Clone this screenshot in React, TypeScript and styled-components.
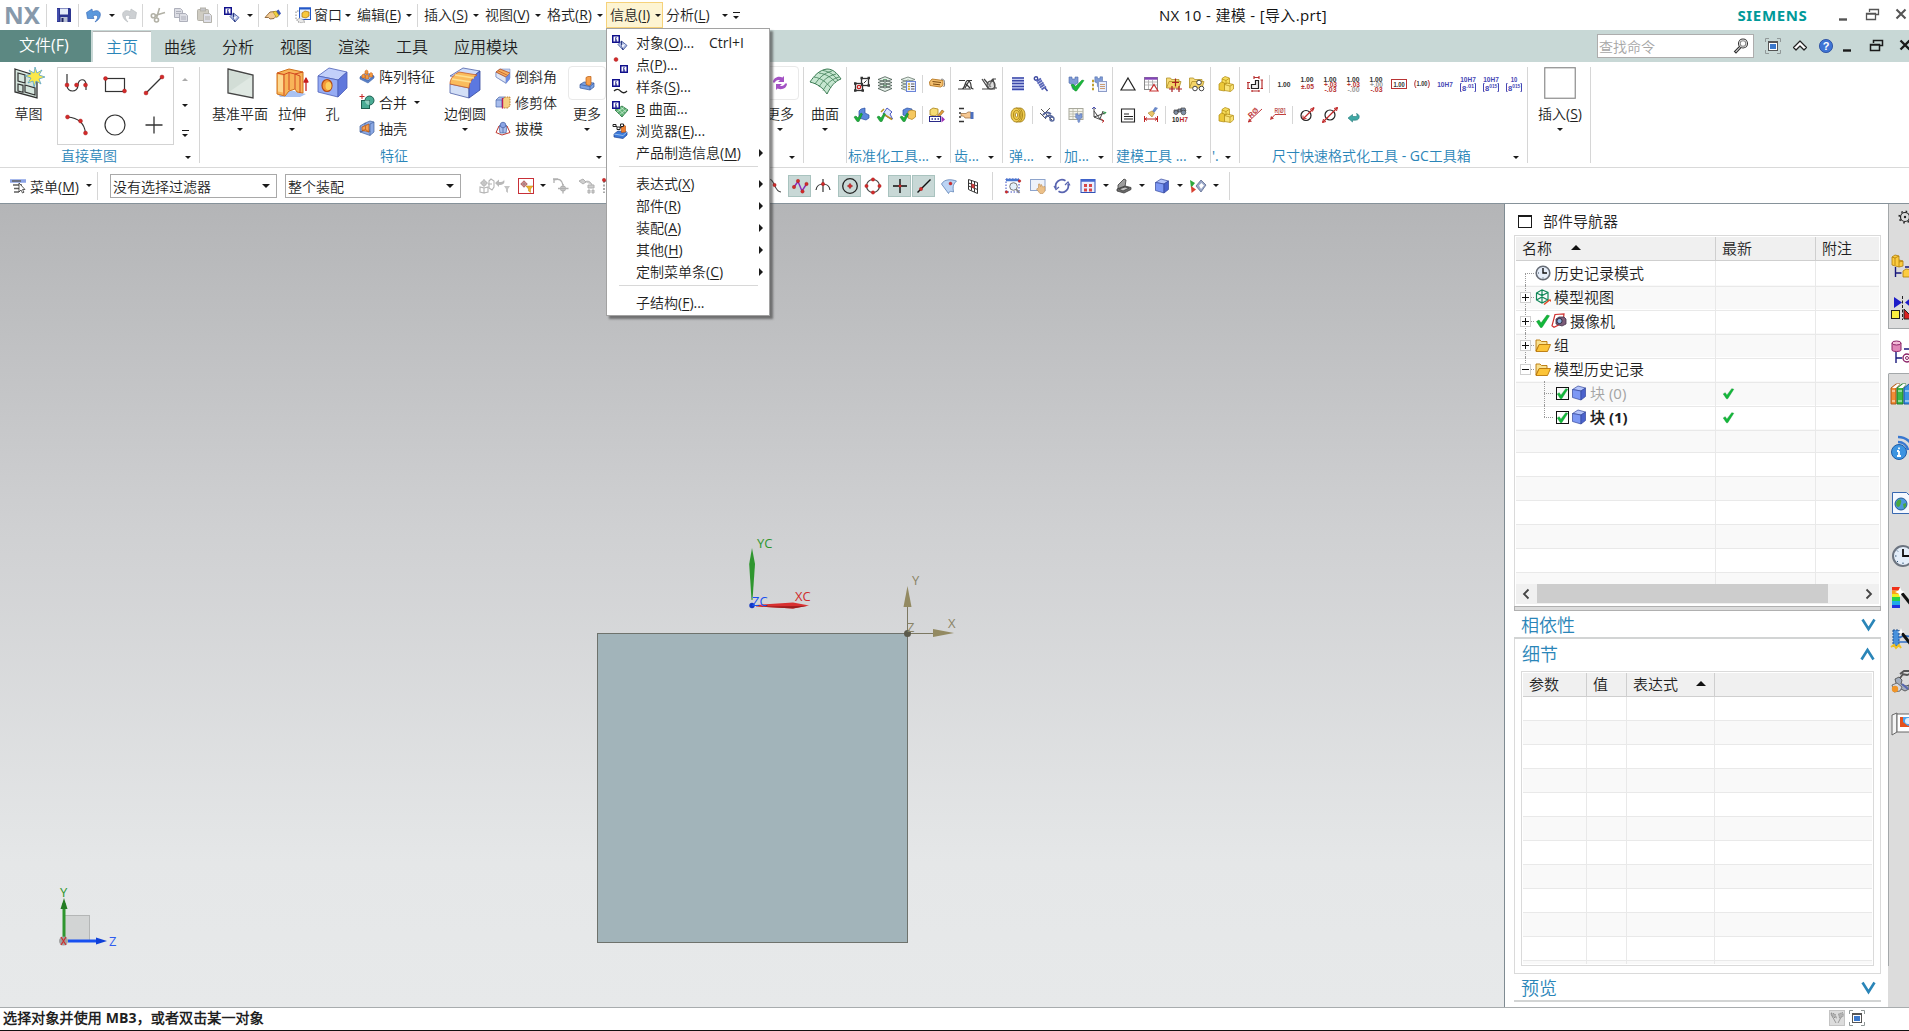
import React from "react";
import styled, { createGlobalStyle, css } from "styled-components";

const INK = "#1f1f1f";
const LINK = "#2a85b8";
const TEAL = "#c8d8d6";

const GlobalStyle = createGlobalStyle`
  * { box-sizing: border-box; }
  html, body { margin: 0; padding: 0; overflow: hidden; }
  body {
    font-family: "Open Sans", "Noto Sans CJK SC DemiLight", "Noto Sans CJK SC", sans-serif;
    font-size: 14px;
    color: ${INK};
    background: #fff;
  }
  u { text-underline-offset: 2px; text-decoration-thickness: 1px; }
`;

/* ---------- icons ---------- */

const cubeSmall = (top: string, left: string, right: string, line: string) => (
  <g stroke={line} strokeWidth=".7" strokeLinejoin="round">
    <path d="M1.500 4.500 7 1l7.500 2L10 6z" fill={top} />
    <path d="M1.500 4.500 10 6v9L1.500 12.500z" fill={left} />
    <path d="M14.500 3v8.500L10 15V6z" fill={right} />
  </g>
);

const infoBox = (x: number, y: number) => (
  <g transform={`translate(${x} ${y})`}>
    <rect x=".75" y=".75" width="6.500" height="6.500" fill="#fff" stroke="#10108c" strokeWidth="1.500" />
    <path d="M4 2v1M4 3.600v2.600M3 3.900h1M2.800 6.100h2.400" stroke="#10108c" strokeWidth="1" />
  </g>
);

const tick = <path d="M1.500 8.500 4 7l2 3 6-8 2.500.8L7 14.500H5.500z" fill="#12b83a" stroke="#0c8f2a" strokeWidth=".5" />;

const dims = (a: string, b?: string, c?: string, cb = "#b83434", cc = "#b83434") => (
  <g fontFamily="Liberation Sans, sans-serif" fontSize="7" textAnchor="middle" fontWeight="bold">
    <text x="8" y={b ? 6 : 10.500} fill="#333" textLength="13" lengthAdjust="spacingAndGlyphs">{a}</text>
    {b && <text x="8.500" y={c ? 11 : 12.500} fill={cb} fontSize="6.500" textLength="13" lengthAdjust="spacingAndGlyphs">{b}</text>}
    {c && <text x="8.500" y="16" fill={cc} fontSize="6.500" textLength="12" lengthAdjust="spacingAndGlyphs">{c}</text>}
  </g>
);

const fits = (a: string, b?: string) => (
  <g fontFamily="Liberation Sans, sans-serif" fontSize="7.500" textAnchor="middle" fontWeight="bold" fill="#4646b4">
    <text x="8" y={b ? 6 : 10.500} textLength={a.length > 2 ? 15.500 : 6.500} lengthAdjust="spacingAndGlyphs">{a}</text>
    {b && (
      <g>
        <path d="M1.500 7.500H.5v8h1M14.500 7.500h1v8h-1" fill="none" stroke="#4646b4" />
        <text x="4.200" y="15" fontSize="7.500">8</text>
        <text x="10.300" y="12" fontSize="5.500" textLength="8" lengthAdjust="spacingAndGlyphs">{b}</text>
      </g>
    )}
  </g>
);

const dot = (x: number, y: number, r = 1.700) => <circle cx={x} cy={y} r={r} fill="#d42a2a" stroke="#a01818" strokeWidth=".4" />;

const folderTree = (
  <g stroke="#b87608" strokeWidth=".9" strokeLinejoin="round">
    <path d="M1 14V3h4l1.500 1.500H12V8H4z" fill="#f8e090" />
    <path d="M1 14.500 4.200 7.500H15.500l-3 7z" fill="#fcc438" />
  </g>
);

const goldBlocks = (
  <g stroke="#b08a10" strokeWidth=".7">
    <path d="M4 2.500 7 .5l4.500 1.500V8H4z" fill="#f6dc5c" />
    <path d="M1 8l2.500-2 3 1v8l-5.500-1z" fill="#ecc838" />
    <path d="M6.500 8.500 9 7l6.500 1.500V13l-3 2.500-6-1z" fill="#f9e376" />
    <path d="M6.500 8.500 12 10v5.500M12 10l3-1.500M4 3l4 1.500V8M8 4.500l3-2" fill="none" />
  </g>
);

const viewFrame = (
  <g>
    <path d="M.5 4V.5H4M12 .5h3.500V4M15.500 12v3.500H12M4 15.500H.5V12" fill="none" stroke="#909898" />
    <rect x="3.500" y="3.500" width="9" height="9" fill="#fff" stroke="#555" />
    <path d="M3 4h10" stroke="#555" strokeWidth="2" />
    <rect x="5" y="6" width="6" height="5" fill="#3a78cc" />
  </g>
);

const filterTool = <path d="M9 8h6l-2 3v4l-2-1.500V11z" fill="#c4c4c4" />;
const clamp = <path d="M1 1h3v2h3V1h3v6l-3 1.500V12L5.500 14 4 12V8.500L1 7z" fill="#7f9bd6" stroke="#4a68a8" strokeWidth=".6" />;

const ICONS: Record<string, React.ReactNode> = {
  save: (
    <g>
      <path d="M1 1h13l1 1v13H1z" fill="#2c3590" />
      <rect x="4" y="1.500" width="8" height="6" fill="#e4ebf8" />
      <rect x="4.500" y="10" width="7" height="5" fill="#b8c0d4" />
      <rect x="5.500" y="11" width="2" height="4" fill="#1c2360" />
      <path d="M2 2v12" stroke="#5a68c8" />
    </g>
  ),
  undo: <path d="M.5 5.500 6 2l.5 2.800c5-2.800 8.500 0 7.800 3.700-.5 3-2.300 5-5.300 6.500 2-2.500 2.900-4 2.500-5.500-.6-1.600-2.500-1.500-4.500-.5L8 11.500H1.500z" fill="#5b98dc" stroke="#2e62b4" strokeWidth=".6" />,
  redo: <path d="M15.500 5.500 10 2l-.5 2.800c-5-2.800-8.500 0-7.800 3.700.5 3 2.300 5 5.300 6.500-2-2.500-2.900-4-2.500-5.500.6-1.600 2.500-1.500 4.500-.5L8 11.500h6.500z" fill="#cdd0d3" stroke="#b4b8bc" strokeWidth=".6" />,
  cut: (
    <g fill="none" stroke="#b2b1a6" strokeWidth="1.600">
      <path d="M9.500 1 6.500 11M15 5.500 5 8.500" />
      <circle cx="3.300" cy="8.800" r="2" />
      <circle cx="6.500" cy="13" r="2" />
    </g>
  ),
  copy: (
    <g fill="#dcdde4" stroke="#aeb0bb">
      <path d="M1.500 1.500h6l2 2v7h-8zM3 4.500h5M3 6.500h5" />
      <path d="M6.500 6.500h6l2 2v6h-8zM8 10h5M8 12h5" />
    </g>
  ),
  paste: (
    <g stroke="#b4b2aa">
      <rect x="1.500" y="2.500" width="11" height="11" rx="1" fill="#cfccc2" />
      <rect x="4.500" y="1" width="5" height="3" fill="#c4c4c8" />
      <path d="M7.500 6.500h6l2 2v7h-8z" fill="#dedfe8" />
      <path d="M9 10h5M9 12h5" />
    </g>
  ),
  infoObj: (
    <g>
      {infoBox(0, 0)}
      <path d="M6 9.500 9.500 6 15 10.500 11 15z" fill="#a9b8e0" stroke="#3a4c98" strokeWidth=".8" />
      <path d="M9.500 6v4L11 15" fill="none" stroke="#2c3a80" />
      <path d="M9.500 10 13.500 9l-3 4z" fill="#f4f7ff" />
    </g>
  ),
  infoPoint: <g>{dot(4, 2.500, 2)}{infoBox(8, 8)}</g>,
  infoSpline: (
    <g>
      {infoBox(0, 0)}
      <path d="M2 12c3-3 5-1.500 7 .5s4 1.500 6-.5" fill="none" stroke="#222" strokeWidth="1.300" />
    </g>
  ),
  infoSurf: (
    <g>
      <path d="M3 9 10 5l6 4-6 7z" fill="#5fb276" stroke="#27703c" strokeWidth=".8" />
      <path d="M5 11l7-4.500M7.500 13.500l7-5M6 7.500l6 6M8.500 6l5.500 5" stroke="#d4f0da" strokeWidth=".7" />
      {infoBox(0, 0)}
    </g>
  ),
  infoBrowser: (
    <g>
      <path d="M2 11l4-3 9 1v3l-4 3.500-9-1.500z" fill="#3a78d8" stroke="#1c3f90" strokeWidth=".7" />
      <path d="M2 11l9 1.500 4-3.500" fill="none" stroke="#a9cbf4" strokeWidth=".8" />
      <path d="M9 3l3-1 1.500 1v6l-4 .5z" fill="#f08030" stroke="#b04c10" strokeWidth=".6" />
      <path d="M1 1.500h3v2H1zM5 4h3v2.500H5zM8.500 1h3v2.500h-3zM4 3l1 1M8 5l2-1.500" fill="#fff" stroke="#222" strokeWidth="1" />
    </g>
  ),
  hand: (
    <g>
      <path d="M0 10.500 5 5l5-.5 3 3-4 4-4 .5-1.500-1.500z" fill="#f3cb94" stroke="#7c5224" strokeWidth=".8" />
      <path d="M9 5.500 13.500 2.500l2.500 4-4 4z" fill="#3c55b8" />
      <path d="M8 5l3-1 3 4.500-2.500 2z" fill="#f0d040" stroke="#a08010" strokeWidth=".5" />
    </g>
  ),
  window: (
    <g>
      <rect x="4.500" y="1" width="11" height="11.500" fill="#e8f0fc" stroke="#2458c8" />
      <path d="M4 1.500h12" stroke="#2458c8" strokeWidth="2" />
      <path d="M7 6l3-2 4 1v4l-3 2-4-1z" fill="#f8c83c" stroke="#a87008" strokeWidth=".7" />
      <path d="M3.500 4H1v9h2.500M3 15h7" fill="none" stroke="#888" strokeDasharray="1.500 1.500" />
      <path d="M4 11l5 2v2l-3 .8-4-2z" fill="#e8e8e8" stroke="#999" strokeWidth=".7" strokeDasharray="1.500 1" />
    </g>
  ),
  pattern: (
    <g>
      <path d="M1 9l6-4 8 3-6 5z" fill="#8eb0e8" stroke="#3c62a8" strokeWidth=".8" />
      <path d="M1 9v2l8 4 6-5V8l-6 5z" fill="#5c84cc" stroke="#3c62a8" strokeWidth=".6" />
      <g fill="#f49a40" stroke="#c25a10" strokeWidth=".5">
        <path d="M3 10V7l1.500-1L6 7v3zM6.500 11V7.500L8 6.500l1.500 1V11zM6 6V3l1.500-1L9 3v3zM10.500 9V5.500l1.500-1 1.500 1V9z" />
      </g>
    </g>
  ),
  unite: (
    <g>
      <path d="M3 0v5M.5 2.500h5" stroke="#c42828" />
      <circle cx="10.500" cy="6.500" r="4.500" fill="#49ab94" stroke="#1d5f50" />
      <rect x="2.500" y="6.500" width="8" height="8" fill="#49ab94" stroke="#1d5f50" />
      <path d="M10.500 11A4.500 4.500 0 0 1 6 6.500h4.500z" fill="#8fd0c0" />
    </g>
  ),
  shell: (
    <g>
      <path d="M1 6 6 3v7l-5 2zM6 3l5-2 4 1v10l-4 3.500-10-3.500 5-2 5 1.500z" fill="#8ba8e4" stroke="#44629c" strokeWidth=".7" />
      <path d="M3 10.500V7l3.500-1.500L10 4v8l-3.500-1z" fill="#f3a054" stroke="#bc5a14" strokeWidth=".8" />
      <path d="M3 10.500l3.500-1V5.500M6.500 9.500 10 12" fill="none" stroke="#bc5a14" strokeWidth=".7" />
      <path d="M11 15.500V4l4-2" fill="none" stroke="#44629c" strokeWidth=".7" />
    </g>
  ),
  chamfer: (
    <g>
      <path d="M1 4l4-3h10v9l-4 5.500L1 9z" fill="#c4d2f0" stroke="#7d92c8" strokeWidth=".6" />
      <path d="M1 4v5l10 6V9z" fill="#dfe6f6" stroke="#6a80bc" strokeWidth=".6" />
      <path d="M1 4 5 1l10 4-4 4z" fill="#f6b060" stroke="#b84c20" strokeWidth=".8" />
      <path d="M11 9l4-4v6l-4 4.500z" fill="#6f8ce0" />
      <path d="M3 2.800l9.500 4.500" stroke="#b84c20" strokeWidth=".7" />
    </g>
  ),
  trim: (
    <g>
      <path d="M1 6l3-3h6v10H1z" fill="#a8bdec" stroke="#4c68ac" strokeWidth=".7" />
      <path d="M1 6h6v7M7 6l3-3" fill="none" stroke="#4c68ac" strokeWidth=".7" />
      <path d="M7.500 5 10 3h5v8.500L13 14H7.500z" fill="#f5cf80" stroke="#a86010" strokeWidth=".8" strokeDasharray="1.500 1" />
      <path d="M7.500 4v10.500" stroke="#b81c5c" strokeWidth="1.400" />
    </g>
  ),
  draft: (
    <g>
      <path d="M4 6l4-3 4 3-1 7H5z" fill="#a9bcec" stroke="#44609c" strokeWidth=".7" />
      <path d="M8 2v11M4 6h8" stroke="#44609c" strokeWidth=".7" />
      <path d="M4 6 1 12.500l6 2.500 8-2.500L12 6" fill="none" stroke="#c03a30" />
      <circle cx="8" cy="5" r="2.800" fill="#8aa4e4" stroke="#3a569c" strokeWidth=".6" />
    </g>
  ),
  moreFeat: (
    <g>
      <path d="M1 9.500 5 7l10 1v4l-4 3-10-2z" fill="#7ba2e4" stroke="#33589c" strokeWidth=".7" />
      <path d="M1 9.500 11 11.500 15 8M11 11.500V15" fill="none" stroke="#33589c" strokeWidth=".7" />
      <path d="M7 9.500V2.500L9 1.500h3v8l-2 1z" fill="#f7a04c" stroke="#b85c14" strokeWidth=".7" />
    </g>
  ),
  swap: (
    <g fill="#a452c4">
      <path d="M1 7.500C1 3 6 .5 10.500 2.500L12 1v6H6l2-1.800C5.500 4.500 3.500 5.500 3 7.500z" />
      <path d="M15 8.500C15 13 10 15.500 5.500 13.500L4 15V9h6l-2 1.800c2.500.7 4.500-.3 5-2.300z" />
    </g>
  ),
  stdNet: (
    <g fill="none" stroke="#333">
      <rect x="7.500" y="2.500" width="7" height="7" strokeWidth="1.300" />
      <rect x="1.500" y="7.500" width="7" height="7" strokeWidth="1.300" />
      <circle cx="5" cy="11" r="1.700" stroke="#c22" strokeWidth="1.300" />
      <path d="M6.500 2h2.500M13.500 2H16M13.500 9.500H16M0 7.500h2.500M0 14.500h2.500M7.500 14.500H10" strokeWidth="2.500" />
      <path d="M10 7l2.500-2.500" />
    </g>
  ),
  layers: (
    <g fill="#e4f0e8" stroke="#44564c" strokeWidth=".8">
      <path d="M1 12.500 8 10l7 2.500L8 15.500zM1 9.500 8 7l7 2.500L8 12zM1 6.500 8 4l7 2.500L8 9zM1 3.500 8 .7l7 2.800L8 6z" />
      <path d="M6 3.500h4M6 9.500h4" stroke="#5a9c6c" />
    </g>
  ),
  layerList: (
    <g>
      <g fill="#e4f0e8" stroke="#6a786e" strokeWidth=".8">
        <path d="M1 12.500 8 10l7 2.500L8 15zM1 9.500 8 7l7 2.500L8 12zM1 6.500 8 4l7 2.500L8 9zM1 3.500 8 1l7 2.500L8 6z" />
      </g>
      <rect x="6.500" y="5.500" width="9" height="10" fill="#eef2ff" stroke="#6a84d8" />
      <path d="M11 8h3.500M11 10.500h3.500M11 13h3.500" stroke="#555" />
      <path d="M8 8h2M8 10.500h2M8 13h2" stroke="#d8a820" strokeWidth="1.600" />
    </g>
  ),
  tag: (
    <g>
      <path d="M.5 6 3 3l11 1.500v5L11.500 11 1 9.500z" fill="#f4c070" stroke="#b87820" strokeWidth=".9" />
      <path d="M3.500 5.500 12 6.500M4 8l7 .8" stroke="#7a4a10" />
      <path d="M12 3.500c2-1 3.500.5 3.500 3s.5 3-1 4.500" fill="none" stroke="#555" strokeWidth=".8" />
    </g>
  ),
  chkPart: (
    <g>
      <path d="M5 4l2-2 4-1v5l4 2v3l-3 2-7-2z" fill="#5c88dc" stroke="#2a4fa0" strokeWidth=".7" />
      <path d="M0 10l2-1 2 2 3-5 1.500 1L5 14.500H3z" fill="#1fae3c" stroke="#0c7c24" strokeWidth=".5" />
    </g>
  ),
  chkDraw: (
    <g>
      <path d="M6 7 10 1l5 4-2 2 2.500 5-5-2z" fill="#dfe6ff" stroke="#3a48b8" strokeWidth=".9" />
      <path d="M4 5l3-3M8 8l7 4.500" stroke="#b89020" strokeWidth="1.500" />
      <path d="M0 10l2-1 2 2 3-5 1.500 1L5 14.500H3z" fill="#1fae3c" stroke="#0c7c24" strokeWidth=".5" />
    </g>
  ),
  chkAsm: (
    <g>
      <path d="M3 3l4-2 5 1v6l-4 2-5-2z" fill="#5c88dc" stroke="#2a4fa0" strokeWidth=".7" />
      <path d="M8 4.500 11 3l4.500 1V10L12 12.500 8 11z" fill="#f6c860" stroke="#b07c14" strokeWidth=".7" />
      <path d="M0 10l2-1 2 2 3-5 1.500 1L5 14.500H3z" fill="#1fae3c" stroke="#0c7c24" strokeWidth=".5" />
    </g>
  ),
  partNum: (
    <g>
      <path d="M1 3l3-2 5 1v5L6 9 1 8z" fill="#f7dc74" stroke="#a88014" strokeWidth=".8" />
      <path d="M8.500 9 13 3l2 1.500L10 10z" fill="#e8a038" stroke="#805010" strokeWidth=".6" />
      <rect x=".5" y="9.500" width="11" height="5" fill="#fff" stroke="#2a2a88" />
      <path d="M2.500 12h1.500M5.500 12h1.500M8.500 12h1.500" stroke="#2a2a88" strokeWidth="1.600" />
      <path d="M12.500 9v6.500l3.500-3z" fill="#a034b8" />
    </g>
  ),
  gear1: <path d="M1 4.500h6M9 4.500h5M0 13h4c3 0 3-8.500 5.500-8.500S13 8 13 10s1 3 2.500 3M4 13h9M8 8l4 4M11 5l-4 7" fill="none" stroke="#3a3a3a" strokeWidth="1.200" />,
  gear2: (
    <g fill="none" stroke="#444" strokeWidth="1.200">
      <path d="M1 3l6 9 5-9h3M1 13h5c3-1 3-9 6-10l2 9h2M5 13h9M3 3l7 8" />
      <circle cx="10" cy="9" r="4" fill="#bbb" fillOpacity=".5" />
    </g>
  ),
  gearHand: (
    <g>
      <path d="M1 1.500h5M1 6h2M1 10h2M1 14.500h5" stroke="#333" strokeWidth="1.400" />
      <path d="M3 6.500h5l2-1.500h3v6H7l-1.500-2H3z" fill="#f6c892" stroke="#96683c" strokeWidth=".7" />
      <rect x="12.500" y="5" width="3" height="7" fill="#4c70c0" />
    </g>
  ),
  springV: (
    <g>
      <rect x="2" y="1" width="12" height="14" fill="#c8d0f4" />
      <path d="M2 2h12M2 4.800h12M2 7.600h12M2 10.400h12M2 13.200h12" stroke="#3c48a8" strokeWidth="1.500" />
    </g>
  ),
  springD: (
    <g fill="none" stroke="#3c48a0" strokeWidth="1.400">
      <circle cx="3" cy="2.500" r="1.700" />
      <path d="M3.500 5.500 8 2.500M4.500 7.500 9 4.500M6 9.500l4.500-3M7 11.500l4.500-3M8.500 13.500l4.500-3" stroke="#5866b8" strokeWidth="2" />
      <path d="M12 12l2.500 3" />
    </g>
  ),
  disc: (
    <g fill="#f0cc50" stroke="#9c7810" strokeWidth=".8">
      <path d="M6 1h4c3 0 5 3 5 7s-2 7-5 7H6" />
      <ellipse cx="6" cy="8" rx="5" ry="7" />
      <ellipse cx="6.500" cy="8" rx="3" ry="4.500" />
      <ellipse cx="6.500" cy="8" rx="1.200" ry="2" fill="#fff" />
      <path d="M9.500 1c4 3 4 11 0 14" fill="none" />
    </g>
  ),
  springCut: (
    <g fill="none" stroke="#56669c" strokeWidth="1.400">
      <path d="M2 2l11 11M11 1 3 9M1 6l6 6" stroke="#555" strokeWidth="1" />
      <path d="M4 8c2-3 5-3 8-1M6 11c2-3 5-3 8-1" strokeWidth="2" />
      <circle cx="13" cy="12" r="2" />
    </g>
  ),
  procCheck: (
    <g>
      {clamp}
      <path d="M3 9l2-1 2.500 2.500L14 4l2 .5L8.500 15H7z" fill="#18b83a" stroke="#0d8c28" strokeWidth=".5" />
    </g>
  ),
  procList: (
    <g>
      <g transform="translate(3 0) scale(.85)">{clamp}</g>
      <path d="M1 5h2M1 9h2M1 13h2" stroke="#c0a030" strokeWidth="2.500" />
      <rect x="7.500" y="5.500" width="8" height="10" fill="#e8eeff" stroke="#8c9cc8" />
      <path d="M9 8.500h5M9 10.500h5M9 12.500h5" stroke="#c08850" strokeWidth=".8" />
    </g>
  ),
  procTable: (
    <g>
      <rect x="1" y="1.500" width="14" height="11" fill="#f4f4ec" stroke="#a8a89c" />
      <path d="M1 4.500h14M1 7h14M1 9.500h14M5 2v10M9.500 2v10" stroke="#b8b8a8" strokeWidth=".8" />
      <g transform="translate(7 6) scale(.7)">{clamp}</g>
    </g>
  ),
  axes: (
    <g fill="none" strokeWidth="1">
      <path d="M3 1v9l10 4M3 10l11-4M3 4l6 8 3-8" stroke="#444" />
      <path d="M1 2l2-2 2 2" stroke="#4a50b8" />
      <path d="M12 5l3 .5-2 2" stroke="#2a9a44" />
      <path d="M10 12l3 2-2 1.500" stroke="#c83030" />
    </g>
  ),
  triangle: <path d="M8 2 15 14H1z" fill="none" stroke="#222" strokeWidth="1.200" />,
  tableTri: (
    <g>
      <rect x="1.500" y="1.500" width="13" height="12" fill="#fff" stroke="#888" />
      <path d="M1.500 2.500h13" stroke="#8444b8" strokeWidth="2.400" />
      <path d="M2 6h12M2 9h12M5.500 4v9M9.500 4v9" stroke="#aaa" strokeWidth=".8" />
      <path d="M11 8.500l4 6.500H7z" fill="#fff" stroke="#c83030" strokeWidth="1.200" />
    </g>
  ),
  folderPlus: (
    <g>
      <path d="M.5 12V2h4l1 1.500H13V7" fill="#f8dc78" stroke="#b09028" strokeWidth=".8" />
      <path d="M.5 12 3 5.500h12L13 12z" fill="#f4d468" stroke="#b09028" strokeWidth=".8" />
      <path d="M9.500 2.500v8M6 6.500h7M6 10v6M3 13h6M13 10v6M10 13h6" stroke="#a82020" strokeWidth="1.200" />
    </g>
  ),
  folderCirc: (
    <g>
      <path d="M.5 12V2h4l1 1.500H13V7" fill="#f8dc78" stroke="#b09028" strokeWidth=".8" />
      <path d="M.5 12 3 5.500h12L13 12z" fill="#f4d468" stroke="#b09028" strokeWidth=".8" />
      <g fill="#fff" stroke="#444"><circle cx="10" cy="6.500" r="2.300" /><circle cx="6" cy="12.500" r="2.300" /><circle cx="12.500" cy="12.500" r="2.300" /></g>
    </g>
  ),
  noteBox: <path d="M1.500 2h13v13h-13zM4 7h5M4 9.500h9M4 12h9" fill="none" stroke="#222" strokeWidth="1.100" />,
  brushDim: (
    <g>
      <path d="M12 0l3 1-4 5-2-1.500z" fill="#6a88c8" />
      <path d="M5 6l4-2 2.500 2L9 10z" fill="#e8c468" stroke="#a88430" strokeWidth=".6" />
      <path d="M1.500 9v6M14.500 9v6M2 12h12M4 10.500 2 12l2 1.500M12 10.500l2 1.500-2 1.500" fill="none" stroke="#c02828" />
    </g>
  ),
  findFit: (
    <g>
      <g fill="#8090a8" stroke="#444" strokeWidth=".7"><path d="M2 3h4v3H2zM9 1h4l1 3H9zM6 2h3v3H6z" /><circle cx="4" cy="5.500" r="2" /><circle cx="11.500" cy="5.500" r="2.300" /></g>
      <g fontFamily="Liberation Sans, sans-serif" fontSize="7.500" fontWeight="bold">
        <text x="0" y="15" fill="#222" textLength="7" lengthAdjust="spacingAndGlyphs">10</text>
        <text x="7.500" y="15" fill="#b82828" textLength="8.500" lengthAdjust="spacingAndGlyphs">H7</text>
      </g>
    </g>
  ),
  gold: goldBlocks,
  stepDim: (
    <g fill="none" strokeWidth="1.200">
      <path d="M4.500 12.500v-4h4v-4h3v8z" fill="#eee" stroke="#222" />
      <path d="M1 7v5M0 6.500h3M0 12.500h3M15 4v8M13.500 4H16M13.500 12.500H16M7 0v3M12 0v3M7 1.500h5M5 14v2M12 14v2M5 15h7" stroke="#b83030" />
    </g>
  ),
  d0: dims("1.00"),
  d1: dims("1.00", "±.05"),
  d2: dims("1.00", "+.03", "-.03"),
  d3: dims("1.00", "+.03", "-.00", "#b83434", "#999"),
  d4: dims("1.00", "+.00", "-.03", "#999", "#b83434"),
  d5: <g><rect x=".5" y="3.500" width="15" height="9" fill="none" stroke="#b83434" /><g transform="translate(1.200 .2) scale(.86 1)">{dims("1.00")}</g></g>,
  d6: (
    <g>
      <path d="M2 4C.3 6 .3 10 2 12M14 4c1.700 2 1.700 6 0 8" fill="none" stroke="#b83434" />
      <g transform="translate(1.300 0) scale(.84 1)">{dims("1.00")}</g>
    </g>
  ),
  f0: fits("10H7"),
  f1: fits("10H7", ".01"),
  f2: fits("10H7", "015"),
  f3: fits("10", "015"),
  leader1: (
    <g>
      <path d="M1 15 15 2" stroke="#c03838" />
      <path d="M1 15.500l1-4 3 3z" fill="#c03838" />
      <text x="2" y="9" fontSize="7.500" fontWeight="bold" fill="#c03838" fontFamily="Liberation Sans" transform="rotate(-42 6 8)">RØ</text>
    </g>
  ),
  leader2: (
    <g>
      <path d="M1 12l4-4.500h11" fill="none" stroke="#c03838" />
      <path d="M0 13l1-4 3 2.500z" fill="#c03838" />
      <text x="4.500" y="6" fontSize="6.500" fontWeight="bold" fill="#c05858" fontFamily="Liberation Sans" textLength="11" lengthAdjust="spacingAndGlyphs">R[Ø]</text>
    </g>
  ),
  dia1: <g fill="none"><circle cx="7" cy="8.500" r="5" stroke="#222" strokeWidth="1.200" /><path d="M4.500 11.500 15 1" stroke="#c02828" strokeWidth="1.200" /><path d="M11 2.500l4-2-1.500 4M4 8.500 4 12l3.500-.5" stroke="#c02828" /></g>,
  dia2: <g fill="none"><circle cx="8" cy="8" r="5" stroke="#222" strokeWidth="1.200" /><path d="M.5 15.500 15.500.5" stroke="#c02828" strokeWidth="1.200" /><path d="M12 1.500l3.500-1-1 3.500M4 14.500l-3.500 1 1-3.500" stroke="#c02828" /></g>,
  back: <path d="M3 11 7.500 7.500V9.500h3c1.500 0 2-1 1-3 2.500 1 3.200 2.500 2.500 4.500-.7 1.800-2 2.200-4 2.200H7.500V15z" fill="#3fa8a4" stroke="#24787a" strokeWidth=".6" />,
  menuList: (
    <g>
      <path d="M0 3h16" stroke="#8aa2e6" strokeWidth="3.500" />
      <path d="M2 3h9M3 7h9M4 10.500h6M4 14h5" stroke="#606060" strokeWidth="1.300" />
      <path d="M9 5v9l2-2 1.500 3 1.500-.8-1.500-2.700H15z" fill="#fff" stroke="#333" strokeWidth=".8" />
    </g>
  ),
  selAsm: (
    <g fill="none" stroke="#b4b4b4" strokeWidth="1.100">
      <path d="M1 5h8M5 1v8M1 9v5l4 1V10zM5 10l4-1v5l-4 1" />
      <circle cx="5" cy="5" r="2.300" />
      <path d="M10 3l2-2 3 2v6l-2 3-3-2zM9 6h4" />
    </g>
  ),
  selUndo: <g><path d="M0 5l4-3.500V4c3 0 5-.5 5-2.500 1.500 4-1 5.500-5 5.500v2z" fill="#b8b8b8" />{filterTool}</g>,
  selBox: (
    <g>
      <rect x=".5" y=".5" width="15" height="15" fill="#fff" stroke="#c83038" />
      <path d="M2.500 6h7M6 2.500v7" stroke="#7c4040" strokeWidth=".8" />
      <circle cx="6" cy="6" r="2.300" fill="none" stroke="#a83030" strokeWidth=".8" />
      <path d="M8 8h7l-2.500 3v3.500L10.500 13v-2z" fill="#f0b428" stroke="#b88010" strokeWidth=".5" />
    </g>
  ),
  snapTarget: (
    <g stroke="#b0b0b0" fill="none" strokeWidth="1.300">
      <path d="M0 1h5M1 1v4M1 2c5-2 8 0 9 5" />
      <path d="M5 10.500h10.500M10 6v9.500" />
      <circle cx="10" cy="10.500" r="2.300" />
    </g>
  ),
  snapTree: <path d="M0 3l4-2 3 3-3 2zM6 4c3-2 6 0 7 3M9 7h6v3H9zM9 12h2v3H9zM13 12h2v3h-2z" fill="#cecece" stroke="#b0b0b0" />,
  snapDots: <g><path d="M2 3v12M2 3h10" stroke="#555" strokeDasharray="2 1.500" fill="none" />{dot(2, 2)}</g>,
  snapCurve: <g><path d="M0 1c6 0 5 13 12 13" fill="none" stroke="#444" strokeWidth="1.200" />{dot(5.500, 7)}</g>,
  snapPoly: <g><path d="M2 9 6 3.500 10 13l4.500-7" fill="none" stroke="#8a2bb8" strokeWidth="1.400" />{dot(6, 3)}{dot(2, 9)}{dot(10.500, 13.500)}{dot(14.500, 6)}</g>,
  snapTop: <g><path d="M1 12C2 4 14 4 15 12M8 1v13" fill="none" stroke="#333" strokeWidth="1.200" />{dot(8, 6)}</g>,
  snapCenter: <g><circle cx="8" cy="8" r="7.300" fill="none" stroke="#222" strokeWidth="1.300" /><path d="M5 8h6M8 5v6" stroke="#822" strokeWidth=".8" />{dot(8, 8)}</g>,
  snapQuad: <g><circle cx="8" cy="8" r="6.500" fill="none" stroke="#444" strokeWidth="1.100" />{dot(8, 1.500)}{dot(8, 14.500)}{dot(1.500, 8)}{dot(14.500, 8)}</g>,
  snapPlus: <g><path d="M1 8h14M8 1v14" stroke="#111" strokeWidth="1.400" />{dot(8, 8, 1.300)}</g>,
  snapLine: <g><path d="M1.500 14.500 14.500 1.500" stroke="#111" strokeWidth="1.400" />{dot(5, 11)}</g>,
  snapFace: <g><path d="M.5 6c3-5 9-5 15-3-3 3-4 5-3 11-3-1-4-1-5 1.500z" fill="#bcd4f4" stroke="#5c80b4" strokeWidth=".8" />{dot(9.500, 5.500, 1.500)}</g>,
  snapGrid: <g><path d="M3.500 1.500l9 3v11l-9-4zM6.500 2.500v10M9.500 3.500v10.500M3.500 5l9 3M3.500 8l9 3.500" fill="none" stroke="#333" /><path d="M6.500 5.500l3 1v4l-3-1z" fill="#d04040" /></g>,
  zoomFit: (
    <g>
      <rect x="1" y="1" width="13" height="13" fill="none" stroke="#3a4ac0" strokeDasharray="1.500 1.500" />
      <path d="M1 2h13" stroke="#4a78d0" strokeWidth="2.500" />
      <circle cx="8.500" cy="8.500" r="3.800" fill="#e4f0fa" stroke="#777" />
      <path d="M11 11l3.500 4" stroke="#888" strokeWidth="1.800" />
      {dot(1.500, 14, 1.300)}{dot(14.500, 3, 1.300)}
    </g>
  ),
  pan: (
    <g>
      <rect x=".5" y="1.500" width="14.500" height="11" fill="#eef2fa" stroke="#8ea4cc" />
      <path d="M6.500 11l2-1V6H10l.5 2.500 1-2 1 2.500L15 8.500V13l-2 2.500h-3z" fill="#ecc088" stroke="#c09058" strokeWidth=".6" />
    </g>
  ),
  rotate: (
    <g fill="none" stroke="#5864b0" strokeWidth="1.700">
      <path d="M2 10A6.300 6.300 0 0 1 11.500 2.800M14 6a6.300 6.300 0 0 1-9.500 7.200" />
      <path d="M0 8l2 3.500L5 9M11 7l3-3 2 3.500" strokeWidth="1.200" />
    </g>
  ),
  fitView: (
    <g>
      <rect x="1" y="1.500" width="14" height="13" fill="#eaf0ff" stroke="#3050b8" />
      <path d="M1 2.500h14" stroke="#4468d0" strokeWidth="2.500" />
      <path d="M4 6h3v3H4zM9 6h3v3H9zM4 10.500h3v3H4zM9 10.500h3v3H9z" fill="#d84848" />
    </g>
  ),
  shade: (
    <g stroke="#3c3c3c" strokeWidth=".8">
      <path d="M2 11V7l6-6 2 1-1 7z" fill="#9c9c9c" />
      <path d="M1 11l8-3 6 1.500v2L8 15l-7-2z" fill="#6c6c6c" />
      <path d="M3 11l6-2 4 1-6 3z" fill="#c4c4c4" />
    </g>
  ),
  cubeBlue: cubeSmall("#b4c4fa", "#7d98f4", "#4a62cc", "#34489c"),
  clipView: (
    <g>
      <path d="M0 2l5 3-4 5z" fill="#2fa83c" />
      <path d="M1 8l5 3.500L1.500 15z" fill="#d84030" />
      <path d="M6 8l5-6 5 5-5 7z" fill="#9aa8c8" stroke="#5c6a90" strokeWidth=".8" />
      <path d="M9 7.500l2.500-2.500L14 7.500 11 11z" fill="#fff" />
    </g>
  ),
  search: <g fill="none" stroke="#333" strokeWidth="1.100"><circle cx="10" cy="5.500" r="4.500" /><circle cx="10" cy="5.500" r="2.800" stroke="#888" /><path d="M6.500 8.500 1.500 13.500l1.500 1.500 5-5.300" /></g>,
  viewFrame,
  upArrow: <path d="M8 3 14.500 9.500l-2.500 2.500-4-4-4 4L1.500 9.500z" fill="#fff" stroke="#222" strokeWidth="1.200" strokeLinejoin="round" />,
  help: (
    <g>
      <circle cx="8" cy="8" r="6.600" fill="#3f74d4" stroke="#23479c" strokeWidth=".8" />
      <text x="8" y="12" fontSize="11" fontWeight="bold" fill="#fff" textAnchor="middle" fontFamily="Liberation Sans">?</text>
    </g>
  ),
  flag: (
    <g>
      <rect x=".5" y=".5" width="15" height="15" fill="#dcdcdc" stroke="#c4c4c4" />
      <path d="M2 4l5 9M14 3.500 9 13" fill="none" stroke="#999" />
      <path d="M2 3l4 1 1.500 4-4-1zM9.500 4l4-1.500 1 3.500-4 2z" fill="#b4b4b4" stroke="#888" strokeDasharray="1 1" />
    </g>
  ),
  history: (
    <g>
      <circle cx="8" cy="8" r="6.800" fill="#e6eefa" stroke="#666c76" strokeWidth="1.600" />
      <path d="M8 3v5h4" fill="none" stroke="#111" strokeWidth="1.400" />
      <path d="M8 13.500v-1M3 8h1" stroke="#345" />
    </g>
  ),
  modelView: (
    <g fill="none" stroke="#108858" strokeWidth="1.200">
      <path d="M1.500 4 7 .8l6 2.700v7.500L7 14 1.500 11zM1.500 4 7 6.500l6-3M7 6.500V14M1.500 11 7 8l6 3M7 1v6" />
      <path d="M9 15.500 14.500 11" stroke="#e04828" strokeWidth="1.600" />
      <path d="M13 10.500h3V13z" fill="#e04828" stroke="none" />
    </g>
  ),
  tick,
  camera: (
    <g>
      <path d="M4 1.500 13 .8l-1 9-9 4.500-2-1.500z" fill="#fff" stroke="#d03030" strokeWidth="1.200" />
      <path d="M5 6l3-2h5l2 2v5l-4 2-6-2z" fill="#7c5c78" stroke="#403048" strokeWidth=".8" />
      <circle cx="8.500" cy="8" r="2.600" fill="#90b4e0" stroke="#223" strokeWidth=".9" />
    </g>
  ),
  folder: folderTree,
};

const BIG: Record<string, React.ReactNode> = {
  sketch: (
    <g>
      <path d="M2 2l22 7v22L2 25z" fill="#d6e6de" stroke="#333" strokeWidth="1.300" />
      <path d="M5 6l7 2v8l-7-2zM5 17l5 1.300v7L5 24zM12 18l10 3v7l-10-3z" fill="none" stroke="#333" strokeWidth="1.200" />
      <path d="M22 0l2 6 5-3-3 5 6 2-6 2 2 5-5-3-2 6-1-6-5 2 3-5-6-2 6-2-2-4 5 3z" fill="#fbe84a" stroke="#5aa4cc" strokeWidth=".8" />
    </g>
  ),
  plane: (
    <g>
      <path d="M4 2l25 6v23L4 26z" fill="#dfe8e2" stroke="#444" strokeWidth="1.300" />
      <path d="M5 3.500l23 5.500L5 25z" fill="#c9d6ce" opacity=".6" />
    </g>
  ),
  extrude: (
    <g strokeLinejoin="round">
      <path d="M1 26l13-3 16 4-6 3H4z" fill="#a9c2f2" />
      <path d="M1 6l12-4 14 3v21l-6-1-2-3-6 2-4 5-8-2z" fill="#f8b458" stroke="#d07018" />
      <path d="M1 6l7 1.500V28M8 7.500l5-2 6 1.500v15M13 5.500V23M19 7l8-2M19 7l5 2v17" fill="none" stroke="#d04820" />
      <path d="M2 7.500 7 8.500v17l-5-1z" fill="#fdd890" />
      <path d="M30 24V12M28 15l2-4 2 4z" fill="#c82020" stroke="#c82020" strokeWidth="1.300" />
    </g>
  ),
  hole: (
    <g stroke="#4c60b8" strokeWidth=".8" strokeLinejoin="round">
      <path d="M1 9 12 1l18 4-9 8z" fill="#c2d0fa" />
      <path d="M1 9l20 4v17L1 25z" fill="#96acf4" />
      <path d="M30 5v16l-9 9V13z" fill="#6078dc" />
      <ellipse cx="10" cy="18.500" rx="5" ry="6" fill="#f49a38" stroke="#b04818" strokeWidth="1.200" />
      <ellipse cx="11.500" cy="19" rx="3" ry="4" fill="#fcd060" stroke="none" />
    </g>
  ),
  blend: (
    <g strokeLinejoin="round" strokeWidth=".8">
      <path d="M1 9 14 1l17 3-9 7z" fill="#cfdcf8" stroke="#4c60a8" />
      <path d="M1 17l19 4v10L1 26z" fill="#d3dff6" stroke="#4c60a8" />
      <path d="M31 4v19l-11 8V20c0-5 3-10 11-16z" fill="#5c78e0" stroke="#34489c" />
      <path d="M1 17c0-5 3-9 9-12l18 3c-5 3-8 8-8 13z" fill="#fabc5c" stroke="#c85c28" />
      <path d="M3 12l19 3M6 8l19 3" stroke="#fde090" strokeWidth="1.600" />
    </g>
  ),
  surface: (
    <g>
      <path d="M1 15C5 9 10 3 18 2c6 0 10 4 14 10-6 2-10 7-14 15-4-6-9-10-17-12z" fill="#c6e6d0" stroke="#3c7c54" />
      <path d="M5 10c7 1 12 5 17 11M10 6c7 1 12 4 17 10M14 3.500c6 1 11 4 15 10M6 17C10 11 15 6 23 4M10 20c4-7 9-11 17-13M14 23.500C18 16 23 12 30 10" fill="none" stroke="#3c7c54" strokeWidth=".8" />
    </g>
  ),
  blank: <rect x=".75" y=".75" width="30.500" height="30.500" fill="#fff" stroke="#8c8c8c" strokeWidth="1.200" />,
};

const GALLERY: React.ReactNode[] = [
  <g key="a"><path d="M3 1v11c0 8 11 8 11 0 0-7 8-7 8 0v5" fill="none" stroke="#333" strokeWidth="1.200" />{dot(3, 12, 2)}{dot(12.500, 12, 2)}{dot(21.500, 12, 2)}</g>,
  <g key="b"><rect x="2.500" y="5.500" width="19" height="13" fill="none" stroke="#333" strokeWidth="1.200" />{dot(2.500, 5.500, 2)}{dot(21.500, 18, 2)}</g>,
  <g key="c"><path d="M4 20 20 4" stroke="#333" strokeWidth="1.200" />{dot(4, 20, 2)}{dot(20, 4, 2)}</g>,
  <g key="d"><path d="M3.500 4c12 1 17 7 18 16" fill="none" stroke="#333" strokeWidth="1.200" />{dot(3.500, 4, 2)}{dot(16.500, 8, 2)}{dot(21.500, 20, 2)}</g>,
  <circle key="e" cx="12" cy="12" r="10" fill="none" stroke="#333" strokeWidth="1.200" />,
  <path key="f" d="M3.500 12h17M12 3.500v17" stroke="#333" strokeWidth="1.300" />,
];

const Svg = styled.svg`
  display: block;
  flex: none;
  overflow: visible;
`;

const Icon = ({ name }: { name: string }) => (
  <Svg width="16" height="16" viewBox="0 0 16 16">{ICONS[name]}</Svg>
);
const BigIcon = ({ name }: { name: string }) => (
  <Svg width="32" height="32" viewBox="0 0 32 32">{BIG[name]}</Svg>
);

/* ---------- shared parts ---------- */

const Shell = styled.div`
  width: 1909px;
  height: 1031px;
  overflow: hidden;
  display: flex;
  flex-direction: column;
  white-space: nowrap;
  border-bottom: 1px solid #111;
`;

const Caret = styled.i<{ $big?: boolean; $up?: boolean; $dim?: boolean }>`
  flex: none;
  display: block;
  width: 0;
  height: 0;
  border: solid transparent;
  border-width: 0 ${(p) => (p.$big ? 4 : 3)}px;
  ${(p) => (p.$up ? "border-bottom" : "border-top")}: ${(p) => (p.$big ? 4 : 3)}px solid ${(p) => (p.$dim ? "#aaa" : "#1a1a1a")};
`;

const VRule = styled.i<{ $h: number; $mx?: number }>`
  flex: none;
  width: 1px;
  height: ${(p) => p.$h}px;
  margin: 0 ${(p) => p.$mx ?? 0}px;
  background: #d6d6d6;
`;

const Cell = styled.div<{ $w: number; $pl?: number }>`
  flex: none;
  display: flex;
  align-items: center;
  width: ${(p) => p.$w}px;
  padding-left: ${(p) => p.$pl ?? 0}px;
`;

/* ---------- title bar ---------- */

const TitleBar = styled.header`
  flex: none;
  height: 30px;
  display: flex;
  align-items: center;
  line-height: 20px;
`;

const NxText = styled.text`
  font: bold 23px "Noto Sans", sans-serif;
  fill: #8799ab;
`;

const MenuButton = styled.div<{ $w: number; $mr: number; $open?: boolean }>`
  flex: none;
  position: relative;
  display: flex;
  align-items: center;
  justify-content: space-between;
  height: 26px;
  width: ${(p) => p.$w}px;
  margin-right: ${(p) => p.$mr}px;
  ${(p) => p.$open && css`
    padding: 0 1px 0 3px;
    background: #fdf4d2;
    border: 1px solid #f6d27a;
  `}
`;

const WindowTitle = styled.div`
  width: 581px;
  font-size: 15px;
  letter-spacing: 0.35px;
  color: #111;
`;

const Brand = styled.div`
  width: 100px;
  font: bold 15px/20px "Noto Sans", sans-serif;
  letter-spacing: 0.65px;
  color: #009999;
`;

const Controls = ({ color, weight }: { color: string; weight: number }) => (
  <Svg width="72" height="16" viewBox="0 0 72 16" fill="none" stroke={color} strokeWidth={weight}>
    <path d="M2 12.500h8" strokeWidth="2.400" />
    <path d="M32.500 5V2.500h9v5H39" />
    <path d="M29.500 6.500h9v6h-9zM29.500 7h9" />
    <path d="M59.500 2.500l9 9M68.500 2.500l-9 9" strokeWidth={weight + 0.8} />
  </Svg>
);

/* ---------- dropdown menu ---------- */

const Menu = styled.div`
  position: absolute;
  z-index: 5;
  left: -1px;
  top: 25px;
  width: 164px;
  height: 288px;
  padding-top: 3px;
  background: #fff;
  border: 1px solid #a2a2a2;
  box-shadow: 3px 3px 2px rgba(60, 60, 60, 0.6);
`;

const MenuItem = styled.div`
  height: 22px;
  display: flex;
  align-items: center;
  padding: 0 6px 0 5px;
`;
const MenuIconBox = styled.span`
  width: 24px;
`;
const MenuText = styled.span`
  flex: 1;
`;
const Shortcut = styled.span`
  width: 54px;
`;
const MenuArrow = styled.i`
  border: solid transparent;
  border-width: 4px 0 4px 4px;
  border-left-color: #1a1a1a;
`;
const MenuRule = styled.hr`
  height: 9px;
  margin: 0 11px 0 12px;
  border: 0;
  background: linear-gradient(#d8d8d8, #d8d8d8) 0 2px / 100% 1px no-repeat;
`;

type Entry = { icon?: string; t?: string; k?: string; post?: string; short?: string; sub?: boolean } | null;
const MENU: Entry[] = [
  { icon: "infoObj", t: "对象(", k: "O", post: ")...", short: "Ctrl+I" },
  { icon: "infoPoint", t: "点(", k: "P", post: ")..." },
  { icon: "infoSpline", t: "样条(", k: "S", post: ")..." },
  { icon: "infoSurf", k: "B", post: " 曲面..." },
  { icon: "infoBrowser", t: "浏览器(", k: "E", post: ")..." },
  { t: "产品制造信息(", k: "M", post: ")", sub: true },
  null,
  { t: "表达式(", k: "X", post: ")", sub: true },
  { t: "部件(", k: "R", post: ")", sub: true },
  { t: "装配(", k: "A", post: ")", sub: true },
  { t: "其他(", k: "H", post: ")", sub: true },
  { t: "定制菜单条(", k: "C", post: ")", sub: true },
  null,
  { t: "子结构(", k: "F", post: ")..." },
];

const InfoMenu = () => (
  <Menu>
    {MENU.map((m, i) =>
      m === null ? (
        <MenuRule key={i} />
      ) : (
        <MenuItem key={i}>
          <MenuIconBox>{m.icon && <Icon name={m.icon} />}</MenuIconBox>
          <MenuText>{m.t}<u>{m.k}</u>{m.post}</MenuText>
          {m.short && <Shortcut>{m.short}</Shortcut>}
          {m.sub && <MenuArrow />}
        </MenuItem>
      )
    )}
  </Menu>
);

const TopMenu = ({ t, k, w, mr }: { t: string; k?: string; w: number; mr: number }) => (
  <MenuButton $w={w} $mr={mr}>
    <span>{t}{k && <>(<u>{k}</u>)</>}</span>
    <Caret />
  </MenuButton>
);

/* ---------- tab strip ---------- */

const TabStrip = styled.nav`
  flex: none;
  height: 32px;
  display: flex;
  align-items: stretch;
  background: ${TEAL};
  font-size: 16px;
`;
const Tab = styled.div<{ $active?: boolean; $w?: number }>`
  width: ${(p) => p.$w ?? 58}px;
  padding-bottom: 1px;
  display: flex;
  align-items: center;
  justify-content: center;
  ${(p) => p.$active && css`
    color: ${LINK};
    background: #fff;
    margin-top: 1px;
    border-top: 1px solid #b4b4b4;
    padding: 0 0 3px;
  `}
`;
const FileTab = styled.div`
  width: 91px;
  margin-right: 2px;
  padding-left: 19px;
  line-height: 30px;
  color: #fff;
  background: #5c8882;
`;
const SearchBox = styled.div`
  width: 157px;
  height: 24px;
  margin: 4px 0 0 auto;
  padding: 0 4px 0 1px;
  display: flex;
  align-items: center;
  justify-content: space-between;
  font-size: 14px;
  color: #a6a6a6;
  background: #fff;
  border: 1px solid #adadad;
`;
const StripTools = styled.div`
  width: 155px;
  height: 32px;
  padding-left: 11px;
  display: flex;
  align-items: center;
  gap: 10.5px;
  > svg:last-child { margin-left: -4px; }
`;

/* ---------- ribbon ---------- */

const RibbonBar = styled.section`
  flex: none;
  height: 106px;
  padding-top: 5px;
  display: flex;
  border-bottom: 1px solid #d9d9d9;
`;
const Group = styled.div<{ $w: number }>`
  flex: none;
  width: ${(p) => p.$w}px;
  height: 96px;
  border-right: 1px solid #d6d6d6;
  display: flex;
  flex-direction: column;
`;
const GroupBody = styled.div`
  height: 80px;
  display: flex;
  align-items: flex-start;
`;
const GroupFoot = styled.div<{ $pl: number }>`
  height: 17px;
  padding: 0 8px 0 ${(p) => p.$pl}px;
  display: flex;
  align-items: center;
  justify-content: space-between;
  color: ${LINK};
  line-height: 20px;
  span { height: 17px; width: 0; }
  i { margin-top: 6px; }
`;
const LargeButton = styled.div<{ $w: number; $ml?: number }>`
  flex: none;
  width: ${(p) => p.$w}px;
  margin-left: ${(p) => p.$ml ?? 0}px;
  display: flex;
  flex-direction: column;
  align-items: center;
  line-height: 29px;
`;
const MoreFrame = styled.div`
  width: 38px;
  height: 34px;
  margin: -1px 0;
  display: flex;
  align-items: center;
  justify-content: center;
  border: 1px solid #e9e9e9;
  border-radius: 4px;
`;
const Stack = styled.div<{ $w: number; $ml: number }>`
  flex: none;
  width: ${(p) => p.$w}px;
  margin: -4px 0 0 ${(p) => p.$ml}px;
`;
const SmallButton = styled.div`
  height: 26px;
  display: flex;
  align-items: center;
  gap: 4px;
  i { margin-left: 3px; }
`;
const GalleryFrame = styled.div`
  width: 117px;
  height: 78px;
  padding: 5px 6px 7px 6px;
  display: grid;
  grid-template-columns: repeat(3, 39px);
  grid-template-rows: 25px 25px;
  row-gap: 15px;
  border: 1px solid #d3d3d3;
`;
const GalleryScroll = styled.div`
  width: 22px;
  height: 78px;
  padding-top: 11px;
  display: flex;
  flex-direction: column;
  align-items: center;
  gap: 23px;
`;
const MoreCaret = styled.i`
  width: 7px;
  padding-top: 3px;
  border-top: 1px solid #1a1a1a;
  display: flex;
  justify-content: center;
`;
const IconRows = styled.div`
  padding: 9px 0 0 7px;
  display: flex;
  flex-direction: column;
  gap: 15px;
`;
const IconRow = styled.div`
  display: flex;
  align-items: center;
  height: 16px;
  gap: 7px;
`;

const Foot = ({ t, pl }: { t?: string; pl: number }) => (
  <GroupFoot $pl={pl}><span>{t}</span><Caret /></GroupFoot>
);

const Large = ({ icon, t, w, ml, caret = true, children }: { icon?: string; t: string; w: number; ml?: number; caret?: boolean; children?: React.ReactNode }) => (
  <LargeButton $w={w} $ml={ml}>
    {icon ? <BigIcon name={icon} /> : children}
    <div>{t}</div>
    {caret && <Caret />}
  </LargeButton>
);

const IconGroup = ({ w, t, pl, rows }: { w: number; t: string; pl: number; rows: string[][] }) => (
  <Group $w={w}>
    <GroupBody>
      <IconRows>
        {rows.map((r, i) => (
          <IconRow key={i}>
            {r.map((n, j) => (n === "|" ? <VRule key={j} $h={18} $mx={-1} /> : <Icon key={j} name={n} />))}
          </IconRow>
        ))}
      </IconRows>
    </GroupBody>
    <Foot t={t} pl={pl} />
  </Group>
);

const Ribbon = () => (
  <RibbonBar>
    <Group $w={200}>
      <GroupBody>
        <Large icon="sketch" t="草图" w={57} caret={false} />
        <GalleryFrame>
          {GALLERY.map((g, i) => <Svg key={i} width="24" height="24" viewBox="0 0 24 24">{g}</Svg>)}
        </GalleryFrame>
        <GalleryScroll><Caret $up $dim /><Caret /><MoreCaret><Caret /></MoreCaret></GalleryScroll>
      </GroupBody>
      <Foot t="直接草图" pl={61} />
    </Group>
    <Group $w={411}>
      <GroupBody>
        <Large icon="plane" t="基准平面" w={56} ml={12} />
        <Large icon="extrude" t="拉伸" w={40} ml={4} />
        <Large icon="hole" t="孔" w={33} ml={4} caret={false} />
        <Stack $w={78} $ml={10}>
          <SmallButton><Icon name="pattern" />阵列特征</SmallButton>
          <SmallButton><Icon name="unite" />合并<Caret /></SmallButton>
          <SmallButton><Icon name="shell" />抽壳</SmallButton>
        </Stack>
        <Large icon="blend" t="边倒圆" w={42} ml={7} />
        <Stack $w={62} $ml={9}>
          <SmallButton><Icon name="chamfer" />倒斜角</SmallButton>
          <SmallButton><Icon name="trim" />修剪体</SmallButton>
          <SmallButton><Icon name="draft" />拔模</SmallButton>
        </Stack>
        <Large t="更多" w={38} ml={11}><MoreFrame><Icon name="moreFeat" /></MoreFrame></Large>
      </GroupBody>
      <Foot t="特征" pl={180} />
    </Group>
    <Group $w={193}>
      <GroupBody>
        <Large t="更多" w={38} ml={150}><MoreFrame><Icon name="swap" /></MoreFrame></Large>
      </GroupBody>
      <Foot pl={0} />
    </Group>
    <Group $w={43}>
      <GroupBody><Large icon="surface" t="曲面" w={42} /></GroupBody>
    </Group>
    <IconGroup w={104} t="标准化工具..." pl={1} rows={[["stdNet", "layers", "layerList", "|", "tag"], ["chkPart", "chkDraw", "chkAsm", "|", "partNum"]]} />
    <IconGroup w={52} t="齿..." pl={3} rows={[["gear1", "gear2"], ["gearHand"]]} />
    <IconGroup w={58} t="弹..." pl={6} rows={[["springV", "springD"], ["disc", "|", "springCut"]]} />
    <IconGroup w={52} t="加..." pl={3} rows={[["procCheck", "procList"], ["procTable", "axes"]]} />
    <IconGroup w={98} t="建模工具 ..." pl={3} rows={[["triangle", "tableTri", "folderPlus", "folderCirc"], ["noteBox", "brushDim", "|", "findFit"]]} />
    <IconGroup w={29} t="'." pl={1} rows={[["gold"], ["gold"]]} />
    <IconGroup
      w={288}
      t="尺寸快速格式化工具 - GC工具箱"
      pl={32}
      rows={[["stepDim", "|", "d0", "d1", "d2", "d3", "d4", "d5", "d6", "f0", "f1", "f2", "f3"], ["leader1", "leader2", "|", "dia1", "dia2", "back"]]}
    />
    <Group $w={63}>
      <GroupBody>
        <LargeButton $w={64}>
          <BigIcon name="blank" />
          <div>插入(<u>S</u>)</div>
          <Caret />
        </LargeButton>
      </GroupBody>
    </Group>
  </RibbonBar>
);

/* ---------- selection bar ---------- */

const SelectionBar = styled.section`
  flex: none;
  height: 36px;
  display: flex;
  align-items: center;
  border-bottom: 1px solid #86929a;
`;
const Combo = styled.div<{ $w: number }>`
  flex: none;
  width: ${(p) => p.$w}px;
  height: 24px;
  margin: 1px 8px 0 0;
  padding: 0 6px 0 2px;
  display: flex;
  align-items: center;
  justify-content: space-between;
  border: 1px solid #a9a9a9;
`;
const Toggle = styled.div<{ $mr: number }>`
  flex: none;
  width: 23px;
  height: 22px;
  margin-right: ${(p) => p.$mr}px;
  display: flex;
  align-items: center;
  justify-content: center;
  background: ${TEAL};
  border: 1px solid #a9c3bf;
`;

const SelBar = () => (
  <SelectionBar>
    <Cell $w={30} $pl={10}><Icon name="menuList" /></Cell>
    <MenuButton $w={62} $mr={5}><span>菜单(<u>M</u>)</span><Caret /></MenuButton>
    <VRule $h={28} />
    <Cell $w={12} />
    <Combo $w={167}>没有选择过滤器<Caret $big /></Combo>
    <Combo $w={176}>整个装配<Caret $big /></Combo>
    <Cell $w={26} $pl={10}><Icon name="selAsm" /></Cell>
    <Cell $w={23}><Icon name="selUndo" /></Cell>
    <Cell $w={22}><Icon name="selBox" /></Cell>
    <Cell $w={13}><Caret /></Cell>
    <Cell $w={26}><Icon name="snapTarget" /></Cell>
    <Cell $w={23}><Icon name="snapTree" /></Cell>
    <Cell $w={167}><Icon name="snapDots" /></Cell>
    <Cell $w={19}><Icon name="snapCurve" /></Cell>
    <Toggle $mr={4}><Icon name="snapPoly" /></Toggle>
    <Cell $w={23}><Icon name="snapTop" /></Cell>
    <Toggle $mr={4}><Icon name="snapCenter" /></Toggle>
    <Cell $w={23}><Icon name="snapQuad" /></Cell>
    <Toggle $mr={1}><Icon name="snapPlus" /></Toggle>
    <Toggle $mr={6}><Icon name="snapLine" /></Toggle>
    <Cell $w={24}><Icon name="snapFace" /></Cell>
    <Cell $w={27}><Icon name="snapGrid" /></Cell>
    <VRule $h={28} />
    <Cell $w={37} $pl={12}><Icon name="zoomFit" /></Cell>
    <Cell $w={24}><Icon name="pan" /></Cell>
    <Cell $w={26}><Icon name="rotate" /></Cell>
    <Cell $w={23}><Icon name="fitView" /></Cell>
    <Cell $w={13}><Caret /></Cell>
    <Cell $w={23}><Icon name="shade" /></Cell>
    <Cell $w={15}><Caret /></Cell>
    <Cell $w={23}><Icon name="cubeBlue" /></Cell>
    <Cell $w={13}><Caret /></Cell>
    <Cell $w={23}><Icon name="clipView" /></Cell>
    <Cell $w={16}><Caret /></Cell>
    <VRule $h={28} />
  </SelectionBar>
);

/* ---------- graphics area ---------- */

const Workspace = styled.main`
  flex: 1;
  min-height: 0;
  display: flex;
`;
const Viewport = styled.div`
  flex: none;
  width: 1505px;
  border-right: 1px solid #7f8b92;
  background: linear-gradient(#b4b5b7, #cfd0d2 40%, #e5e7e8 82%, #e7e9ea);
  overflow: hidden;
`;
const AxisLabel = styled.text`
  font: 13px "Open Sans", sans-serif;
`;

const Scene = () => (
  <Svg width="1504" height="803" viewBox="0 204 1504 803">
    <rect x="597.500" y="633.500" width="310" height="309" fill="#a2b4ba" stroke="#6e726c" />
    <g stroke="#7c7862">
      <path d="M907.500 633V600M908 633.500h30" />
    </g>
    <path d="M907.500 586l4 21h-8z" fill="#938a62" />
    <path d="M954 633l-21-4v8z" fill="#938a62" />
    <circle cx="907.500" cy="633.500" r="3.500" fill="#5c5a4c" />
    <g fill="#8a8466">
      <AxisLabel x="912" y="585">Y</AxisLabel>
      <AxisLabel x="948" y="628">X</AxisLabel>
      <AxisLabel x="907" y="632" fontSize="11">Z</AxisLabel>
    </g>
    <path d="M752 548l3 16-2.500 36h-1L749.200 564z" fill="#2f962f" />
    <path d="M809 605.500l-16-3-37 2.500v1.500l37 2z" fill="#d83030" />
    <path d="M757 606.500l36 2 14-2.500z" fill="#9c1c1c" />
    <circle cx="752" cy="605.500" r="2.700" fill="#1438c0" />
    <AxisLabel x="757" y="548" fill="#2f962f">YC</AxisLabel>
    <AxisLabel x="795" y="601" fill="#d02c2c">XC</AxisLabel>
    <AxisLabel x="752" y="606" fill="#1850f0">ZC</AxisLabel>
    <rect x="64.500" y="915.500" width="25" height="25" fill="#d2d4d4" stroke="#b4b6b6" />
    <path d="M64 938V903" stroke="#2f962f" strokeWidth="3" />
    <path d="M64 898l3.500 11h-7z" fill="#247c24" />
    <path d="M68 941h29" stroke="#1850f0" strokeWidth="3" />
    <path d="M107 941l-11-3.500v7z" fill="#1040d8" />
    <circle cx="63.500" cy="941" r="4.500" fill="#a0a0a0" />
    <path d="M61 937l5 8M66 937l-5 8" stroke="#d02c2c" strokeWidth="1.200" />
    <AxisLabel x="60" y="897" fill="#2f962f">Y</AxisLabel>
    <AxisLabel x="109" y="946" fill="#2f5cf0">Z</AxisLabel>
  </Svg>
);

/* ---------- part navigator ---------- */

const Panel = styled.aside`
  flex: none;
  width: 383px;
  padding: 0 7px 0 9px;
  display: flex;
  flex-direction: column;
  background: #fff;
`;
const PanelTitle = styled.div`
  height: 31px;
  padding: 1px 0 0 4px;
  display: flex;
  align-items: center;
  gap: 11px;
  font-size: 15px;
`;
const PinBox = styled.i`
  width: 14px;
  height: 13px;
  margin-top: 3px;
  border: 1px solid #1a1a1a;
  border-top-width: 2px;
`;
const TableFrame = styled.div<{ $h: number; $m?: string; $noBottom?: boolean }>`
  flex: none;
  height: ${(p) => p.$h}px;
  margin: ${(p) => p.$m ?? "0"};
  padding: 1px;
  border: 1px solid #dadada;
  ${(p) => p.$noBottom && "border-bottom: 0;"}
`;
const GridBody = styled.div<{ $h: number }>`
  height: ${(p) => p.$h}px;
  overflow: hidden;
`;
const GridRow = styled.div<{ $cols: string; $head?: boolean; $alt?: boolean }>`
  display: grid;
  grid-template-columns: ${(p) => p.$cols};
  height: 24px;
  font-size: 15px;
  line-height: 22px;
  background: ${(p) => (p.$head ? "#f0f0f0" : p.$alt ? "#f9f9f9" : "#fff")};
  > div {
    display: flex;
    align-items: center;
    min-width: 0;
    padding: 0 0 1px 6px;
    border-bottom: 1px solid ${(p) => (p.$head ? "#cfcfcf" : "#e9e9e9")};
    border-right: 1px solid ${(p) => (p.$head ? "#cfcfcf" : "#e9e9e9")};
  }
  > div:last-child { border-right: 0; }
`;
const SortMark = styled.i<{ $ml: number }>`
  margin: 0 0 1px ${(p) => p.$ml}px;
  border: solid transparent;
  border-width: 0 5px 5px;
  border-bottom-color: #111;
`;

const Node = styled.span<{ $depth: number; $dim?: boolean; $bold?: boolean }>`
  display: flex;
  align-items: center;
  height: 24px;
  margin-left: ${(p) => (p.$depth ? 17 : -2)}px;
  color: ${(p) => (p.$dim ? "#a4a4a4" : INK)};
  font-weight: ${(p) => (p.$bold ? 700 : 400)};
`;
const Branch = styled.span<{ $kind: "first" | "mid" | "last" }>`
  position: relative;
  width: 15px;
  height: 24px;
  display: flex;
  align-items: center;
  &::before {
    content: "";
    position: absolute;
    left: 5px;
    top: ${(p) => (p.$kind === "first" ? 12 : 0)}px;
    height: ${(p) => (p.$kind === "mid" ? 24 : 12)}px;
    border-left: 1px dotted #999;
  }
  &::after {
    content: "";
    position: absolute;
    left: 5px;
    right: 1px;
    top: 12px;
    border-top: 1px dotted #999;
  }
`;
const Expander = styled.i`
  position: relative;
  z-index: 1;
  width: 11px;
  height: 11px;
  background: #fff;
  border: 1px solid #d0d0d0;
`;
const CheckBox = styled.span`
  width: 13px;
  height: 13px;
  margin: 0 2px 0 2px;
  border: 1px solid #111;
  display: flex;
  align-items: center;
  justify-content: center;
`;
const NodeText = styled.span`
  margin: -1px 0 0 3px;
`;

const TREE: { t: string; icon: string; exp?: string; check?: boolean; depth: number; dim?: boolean; bold?: boolean; kind: "first" | "mid" | "last" }[] = [
  { t: "历史记录模式", icon: "history", depth: 0, kind: "first" },
  { t: "模型视图", icon: "modelView", exp: "+", depth: 0, kind: "mid" },
  { t: "摄像机", icon: "camera", exp: "+", check: true, depth: 0, kind: "mid" },
  { t: "组", icon: "folder", exp: "+", depth: 0, kind: "mid" },
  { t: "模型历史记录", icon: "folder", exp: "-", depth: 0, kind: "last" },
  { t: "块 (0)", icon: "cubeBlue", depth: 1, dim: true, kind: "mid" },
  { t: "块 (1)", icon: "cubeBlue", depth: 1, bold: true, kind: "last" },
];

const TREE_COLS = "200px 100px 1fr";
const DETAIL_COLS = "64px 40px 88px 1fr";

const Sign = ({ s }: { s: string }) => (
  <Svg width="9" height="9" viewBox="0 0 9 9"><path d={s === "+" ? "M1 4.500h7M4.500 1v7" : "M1 4.500h7"} stroke="#111" /></Svg>
);
const SmallTick = ({ size }: { size: number }) => (
  <Svg width={size} height={size} viewBox="0 0 16 16">{tick}</Svg>
);

const ScrollBar = styled.div`
  height: 20px;
  padding: 0 6px;
  display: flex;
  align-items: stretch;
  justify-content: space-between;
  background: #f0f0f0;
`;
const Thumb = styled.div`
  width: 292px;
  margin: 0 37px 1px 7px;
  background: #cdcdcd;
`;
const Splitter = styled.div`
  flex: none;
  height: 5px;
  background: #dcdcdc;
  border: 1px solid #b0b0b0;
`;
const Section = styled.div<{ $h: number; $pt?: number; $pb?: number }>`
  flex: none;
  height: ${(p) => p.$h}px;
  padding: ${(p) => p.$pt ?? 0}px 5px ${(p) => p.$pb ?? 0}px 7px;
  display: flex;
  align-items: center;
  justify-content: space-between;
  font-size: 18px;
  line-height: 24px;
  color: ${LINK};
`;
const Bar = styled.div`
  flex: none;
  height: 2px;
  background: #d2d4d4;
`;
const DetailBox = styled.div`
  flex: none;
  height: 335px;
  border: 1px solid #dadada;
  border-top: 0;
`;

const Chevron = ({ up }: { up?: boolean }) => (
  <Svg width="15" height="12" viewBox="0 0 15 12">
    <path d={up ? "M1.500 11.500 7.500 2l6 9.500" : "M1.500.5l6 9.500 6-9.500"} fill="none" stroke={LINK} strokeWidth="2.600" />
  </Svg>
);

const Navigator = () => (
  <Panel>
    <PanelTitle><PinBox />部件导航器</PanelTitle>
    <TableFrame $h={371} $noBottom>
      <GridBody $h={347}>
        <GridRow $cols={TREE_COLS} $head>
          <div>名称<SortMark $ml={19} /></div>
          <div>最新</div>
          <div>附注</div>
        </GridRow>
        {TREE.map((n, i) => (
          <GridRow key={i} $cols={TREE_COLS} $alt={i % 2 === 1}>
            <div>
              <Node $depth={n.depth} $dim={n.dim} $bold={n.bold}>
                <Branch $kind={n.kind}>{n.exp && <Expander><Sign s={n.exp} /></Expander>}</Branch>
                {n.depth === 1 && <CheckBox><SmallTick size={13} /></CheckBox>}
                {n.check && <Icon name="tick" />}
                <Icon name={n.icon} />
                <NodeText>{n.t}</NodeText>
              </Node>
            </div>
            <div>{n.depth === 1 && <SmallTick size={13} />}</div>
            <div />
          </GridRow>
        ))}
        {Array.from({ length: 7 }, (_, i) => (
          <GridRow key={i} $cols={TREE_COLS} $alt={i % 2 === 0}><div /><div /><div /></GridRow>
        ))}
      </GridBody>
      <ScrollBar>
        <Svg width="8" height="20" viewBox="0 0 8 20"><path d="M6.500 5.500 2 10l4.500 4.500" fill="none" stroke="#444" strokeWidth="1.800" /></Svg>
        <Thumb />
        <Svg width="8" height="20" viewBox="0 0 8 20"><path d="M1.500 5.500 6 10l-4.500 4.500" fill="none" stroke="#444" strokeWidth="1.800" /></Svg>
      </ScrollBar>
    </TableFrame>
    <Splitter />
    <Section $h={26} $pt={2}>相依性<Chevron /></Section>
    <Bar />
    <DetailBox>
      <Section $h={32} $pb={3}>细节<Chevron up /></Section>
      <TableFrame $h={295} $m="0 6px">
        <GridBody $h={291}>
          <GridRow $cols={DETAIL_COLS} $head>
            <div>参数</div><div>值</div><div>表达式<SortMark $ml={18} /></div><div />
          </GridRow>
          {Array.from({ length: 12 }, (_, i) => (
            <GridRow key={i} $cols={DETAIL_COLS} $alt={i % 2 === 1}><div /><div /><div /><div /></GridRow>
          ))}
        </GridBody>
      </TableFrame>
    </DetailBox>
    <Section $h={26} $pt={1}>预览<Chevron /></Section>
    <Bar />
  </Panel>
);

/* ---------- resource bar ---------- */

const Resource = styled.div`
  flex: none;
  width: 21px;
  display: flex;
  flex-direction: column;
  overflow: hidden;
  background: #dcdcdc;
`;
const ResourceTab = styled.div<{ $h: number; $pt?: number; $active?: boolean; $edge?: boolean }>`
  flex: none;
  height: ${(p) => p.$h}px;
  padding: ${(p) => p.$pt ?? 0}px 0 0 2px;
  background: ${(p) => (p.$active ? "#fff" : "#dcdcdc")};
  border-left: 1px solid ${(p) => (p.$active ? "#fff" : "#a4a8aa")};
  border-bottom: ${(p) => (p.$edge ? "1px solid #a4a8aa" : "0")};
`;

const RES: { h: number; pt: number; active?: boolean; edge?: boolean; art: React.ReactNode }[] = [
  { h: 46, pt: 1, art: <g><circle cx="14" cy="12" r="4.500" fill="none" stroke="#222" strokeWidth="1.200" /><circle cx="14" cy="12" r="5.800" fill="none" stroke="#222" strokeWidth="1.600" strokeDasharray="1.600 2.950" /><circle cx="14" cy="12" r="1.200" fill="#222" /></g> },
  { h: 42, pt: 4, art: <g stroke="#b07c08" strokeWidth=".8"><path d="M1 3l3-2 4 1v4l4 1v5l-4 1-7-2z" fill="#fccc40" /><path d="M4 4v7M1 3l3 1 4-2M8 6v7M8 8l4-1" fill="none" /><path d="M4.500 13v10M4.500 19h6M14 13h8" stroke="#18187c" strokeWidth="1.400" fill="none" /><path d="M12 17l3-2 6 1v7h-9z" fill="#fccc40" /></g> },
  { h: 37, pt: 4, edge: true, art: <g><path d="M3 1v11l8-5.500zM21 1v11l-7-5.500z" fill="#1c1cc8" /><path d="M11.500 0v24" stroke="#222" strokeDasharray="3 1.500" /><rect x=".5" y="14.500" width="8" height="8" fill="#fbf040" stroke="#222" /><path d="M13 13v10h10z" fill="#d82020" stroke="#222" /></g> },
  { h: 45, pt: 11, active: true, edge: true, art: <g><path d="M1 3v7c0 2 9 2 9 0V3" fill="#e088b8" stroke="#8c2468" /><ellipse cx="5.500" cy="3" rx="4.500" ry="2" fill="#f4bcd8" stroke="#8c2468" /><path d="M5 12v11M5 18h6M13 9h9" stroke="#18187c" strokeWidth="1.400" fill="none" /><circle cx="16" cy="18" r="4" fill="none" stroke="#8c2468" strokeWidth="1.400" /><circle cx="16" cy="18" r="1.500" fill="none" stroke="#8c2468" /></g> },
  { h: 55, pt: 9, art: <g strokeWidth=".9"><path d="M0 5l5-4h4L5 5v16H0z" fill="#f08c34" stroke="#a85010" /><path d="M6 5l5-4h4l-3 4v16H6z" fill="#3cb848" stroke="#147420" /><path d="M13 5l5-4h4v18l-3 2h-6z" fill="#3c94e4" stroke="#144c9c" /><path d="M1 5l5-4h3L5 5zM7 5l5-4h3l-3 4z" fill="#fff" /><path d="M1 8h3M1 18h3M7 8h4M7 18h4M14 8h4M14 18h4" stroke="#fff" /></g> },
  { h: 55, pt: 7, art: <g fill="none" stroke="#3878d0" strokeWidth="2.500"><path d="M7 1c8 0 14 5 15 13M7 6c5 0 9 3 10 8" /><circle cx="8" cy="16" r="7.500" fill="#3c94e0" stroke="#1c5ca8" strokeWidth="1" /><path d="M8 11.500v1.800M8 15v5M6 15h2M6 20h4" stroke="#fff" strokeWidth="1.800" /></g> },
  { h: 54, pt: 7, art: <g><path d="M1.500 1.500h14l5 5v16h-19z" fill="#f4f8ff" stroke="#3868b0" /><circle cx="10" cy="13" r="6" fill="#4c98dc" stroke="#245c98" /><path d="M6 10c3-3 5-1 4 2s-2 4-3 4-3-3-1-6zM12 13l3-1v3l-2 3z" fill="#48a840" /></g> },
  { h: 42, pt: 7, art: <g><circle cx="12" cy="11" r="10" fill="#e4eefa" stroke="#6c7480" strokeWidth="2" /><path d="M12 4v7h7" fill="none" stroke="#111" strokeWidth="1.800" /><path d="M4 11h1.500M12 19v-1.500M6 5.500l1 1M6 17l1-1" stroke="#357" /></g> },
  { h: 42, pt: 6, art: <g><path d="M1 1h8v3.500H1z" fill="#f03018" /><path d="M1 4.500h8V8H1z" fill="#fca018" /><path d="M1 8h8v3H1z" fill="#f0f020" /><path d="M1 11h8v4H1z" fill="#28d048" /><path d="M1 15h8v4H1z" fill="#20a8e8" /><path d="M1 19h8v3H1z" fill="#2030e0" /><path d="M10 6l12 15" stroke="#111" strokeWidth="3" /><path d="M9 1l1.500 3.500L14 6l-3.500 1.500L9 11 7.500 7.500 4 6l3.500-1.500z" fill="#fff" /></g> },
  { h: 42, pt: 6, art: <g><path d="M2 2h6v16H2z" fill="#4890dc" stroke="#205090" strokeDasharray="2 1" /><path d="M8 10c4-3 8-3 14 0M8 14h14" stroke="#3070c8" strokeWidth="1.600" fill="none" /><path d="M10 4l12 15" stroke="#111" strokeWidth="3" /><path d="M0 19l3-2 2 3 3-3 2 3" stroke="#f0c020" strokeWidth="2" fill="none" /><path d="M10 0l1 3 3 1-3 1-1 3-1-3-3-1 3-1z" fill="#fff" /></g> },
  { h: 42, pt: 6, art: <g><path d="M9 4l4-3h9M11 4l5 1 5-2M12 4 7 11" fill="none" stroke="#555" strokeWidth="1.800" /><path d="M4 9l4-2 3 3-1 4 5 2 3-1v4l-4 2-6-3-3-5z" fill="#a4aebe" stroke="#444" strokeWidth=".8" /><path d="M1 15l5-2 5 4-2 4-6 1z" fill="#d4d8e0" stroke="#555" strokeWidth=".8" /><circle cx="4" cy="19" r="3.200" fill="#f09428" /><path d="M11 14l6 5" stroke="#5868b0" strokeWidth="2" /></g> },
  { h: 260, pt: 7, art: <g><path d="M1 2l5-2v19l-5 3z" fill="#f4f4f4" stroke="#666" /><path d="M6 1h16v18H6z" fill="#fff" stroke="#666" /><path d="M9 4h13v10H9z" fill="#e4501c" /><path d="M12 4h10v7l-5 2-5-4z" fill="#4ca4ec" /><circle cx="17" cy="8" r="3" fill="#fff" opacity=".8" /></g> },
];

/* ---------- status bar ---------- */

const Status = styled.footer`
  flex: none;
  height: 23px;
  padding: 0 44px 3px 3px;
  display: flex;
  align-items: center;
  border-top: 1px solid #a8acae;
  font-weight: 700;
  line-height: 20px;
`;
const StatusText = styled.span`
  flex: 1;
  letter-spacing: 0.13px;
`;
const StatusIcons = styled.span`
  display: flex;
  gap: 4px;
`;

export default function App() {
  return (
    <Shell>
      <GlobalStyle />
      <TitleBar>
        <Cell $w={46} $pl={4}>
          <Svg width="38" height="30" viewBox="0 0 38 30"><NxText x="0" y="24" textLength="36" lengthAdjust="spacingAndGlyphs">NX</NxText></Svg>
        </Cell>
        <VRule $h={23} />
        <Cell $w={31} $pl={9}><Icon name="save" /></Cell>
        <VRule $h={23} />
        <Cell $w={30} $pl={7}><Icon name="undo" /></Cell>
        <Cell $w={12}><Caret /></Cell>
        <Cell $w={21}><Icon name="redo" /></Cell>
        <VRule $h={23} />
        <Cell $w={30} $pl={7}><Icon name="cut" /></Cell>
        <Cell $w={23}><Icon name="copy" /></Cell>
        <Cell $w={21}><Icon name="paste" /></Cell>
        <VRule $h={23} />
        <Cell $w={29} $pl={6}><Icon name="infoObj" /></Cell>
        <Cell $w={11}><Caret /></Cell>
        <VRule $h={23} />
        <Cell $w={28} $pl={6}><Icon name="hand" /></Cell>
        <VRule $h={23} />
        <Cell $w={26} $pl={7}><Icon name="window" /></Cell>
        <TopMenu t="窗口" w={37} mr={6} />
        <TopMenu t="编辑" k="E" w={55} mr={5} />
        <VRule $h={23} />
        <Cell $w={6} />
        <TopMenu t="插入" k="S" w={55} mr={6} />
        <TopMenu t="视图" k="V" w={56} mr={6} />
        <TopMenu t="格式" k="R" w={56} mr={3} />
        <MenuButton $w={57} $mr={3} $open>
          <span>信息(<u>I</u>)</span>
          <Caret />
          <InfoMenu />
        </MenuButton>
        <TopMenu t="分析" k="L" w={62} mr={5} />
        <MoreCaret><Caret /></MoreCaret>
        <Cell $w={419} />
        <WindowTitle>NX 10 - 建模 - [导入.prt]</WindowTitle>
        <Brand>SIEMENS</Brand>
        <Controls color="#555" weight={1.300} />
      </TitleBar>
      <TabStrip>
        <FileTab>文件(F)</FileTab>
        <Tab $active>主页</Tab>
        {["曲线", "分析", "视图", "渲染", "工具"].map((t) => <Tab key={t}>{t}</Tab>)}
        <Tab $w={90}>应用模块</Tab>
        <SearchBox>查找命令<Icon name="search" /></SearchBox>
        <StripTools>
          <Icon name="viewFrame" />
          <Icon name="upArrow" />
          <Icon name="help" />
          <Controls color="#1a1a1a" weight={1.500} />
        </StripTools>
      </TabStrip>
      <Ribbon />
      <SelBar />
      <Workspace>
        <Viewport><Scene /></Viewport>
        <Navigator />
        <Resource>
          {RES.map((r, i) => (
            <ResourceTab key={i} $h={r.h} $pt={r.pt} $active={r.active} $edge={r.edge}>
              <Svg width="24" height="24" viewBox="0 0 24 24">{r.art}</Svg>
            </ResourceTab>
          ))}
        </Resource>
      </Workspace>
      <Status>
        <StatusText>选择对象并使用 MB3，或者双击某一对象</StatusText>
        <StatusIcons><Icon name="flag" /><Icon name="viewFrame" /></StatusIcons>
      </Status>
    </Shell>
  );
}
